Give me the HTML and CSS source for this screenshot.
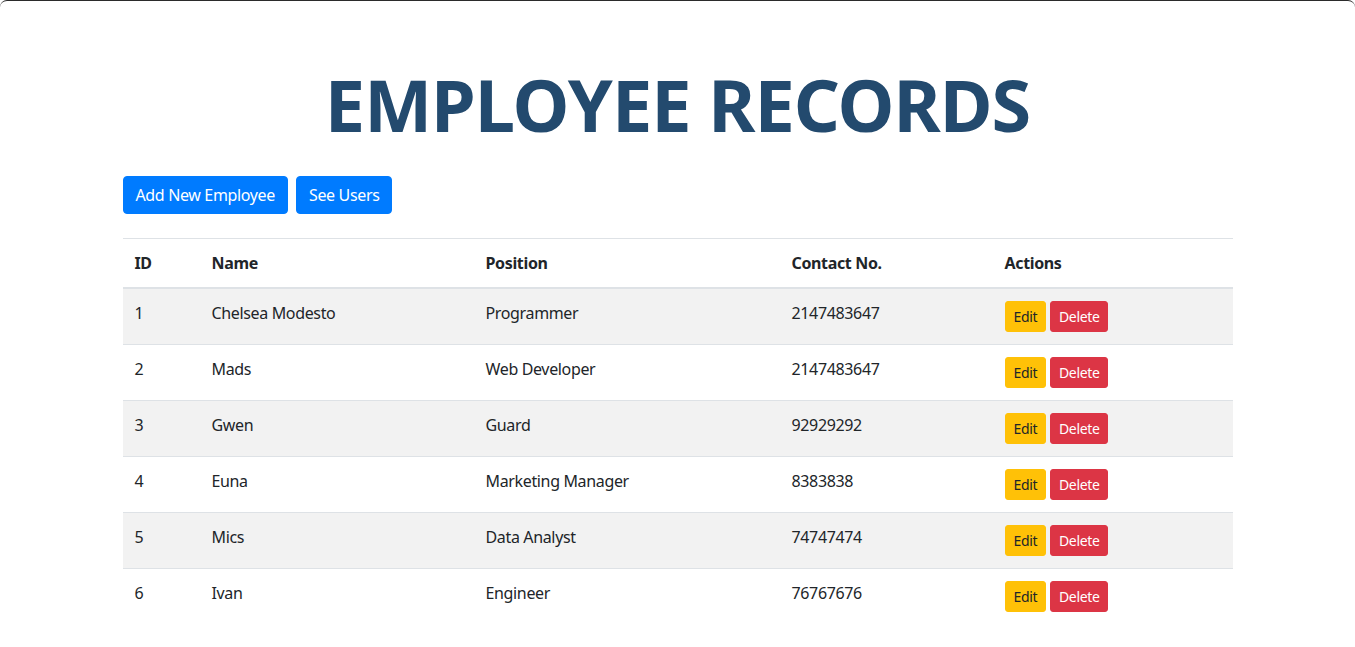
FILE: index.html
```html
<!DOCTYPE html>
<html lang="en">
<head>
<meta charset="utf-8">
<title>Employee Records</title>
<link rel="stylesheet" href="styles.css">
</head>
<body>
<div class="frame">
  <div class="container">
    <h1 class="title">EMPLOYEE RECORDS</h1>
    <div class="toolbar">
      <a class="btn btn-primary" href="#">Add New Employee</a>
      <a class="btn btn-primary" href="#">See Users</a>
    </div>
    <table class="table">
      <colgroup>
        <col class="c-id"><col class="c-name"><col class="c-pos"><col class="c-contact"><col class="c-act">
      </colgroup>
      <thead>
        <tr><th>ID</th><th>Name</th><th>Position</th><th>Contact No.</th><th>Actions</th></tr>
      </thead>
      <tbody>
        <tr><td>1</td><td>Chelsea Modesto</td><td>Programmer</td><td>2147483647</td><td><a class="btn btn-sm btn-warning" href="#">Edit</a> <a class="btn btn-sm btn-danger" href="#">Delete</a></td></tr>
        <tr><td>2</td><td>Mads</td><td>Web Developer</td><td>2147483647</td><td><a class="btn btn-sm btn-warning" href="#">Edit</a> <a class="btn btn-sm btn-danger" href="#">Delete</a></td></tr>
        <tr><td>3</td><td>Gwen</td><td>Guard</td><td>92929292</td><td><a class="btn btn-sm btn-warning" href="#">Edit</a> <a class="btn btn-sm btn-danger" href="#">Delete</a></td></tr>
        <tr><td>4</td><td>Euna</td><td>Marketing Manager</td><td>8383838</td><td><a class="btn btn-sm btn-warning" href="#">Edit</a> <a class="btn btn-sm btn-danger" href="#">Delete</a></td></tr>
        <tr><td>5</td><td>Mics</td><td>Data Analyst</td><td>74747474</td><td><a class="btn btn-sm btn-warning" href="#">Edit</a> <a class="btn btn-sm btn-danger" href="#">Delete</a></td></tr>
        <tr><td>6</td><td>Ivan</td><td>Engineer</td><td>76767676</td><td><a class="btn btn-sm btn-warning" href="#">Edit</a> <a class="btn btn-sm btn-danger" href="#">Delete</a></td></tr>
      </tbody>
    </table>
  </div>
</div>
</body>
</html>
```
FILE: styles.css
```css
html, body {
  margin: 0;
  padding: 0;
  background: #fff;
}
body {
  font-family: "Noto Sans", "Open Sans", Arial, sans-serif;
  font-size: 16px;
  line-height: 1.5;
  color: #212529;
  letter-spacing: -0.35px;
}
.frame {
  min-height: 646px;
  border-top: 1px solid #2b2b2b;
  border-radius: 7px 7px 0 0;
}
.container {
  width: 1110px;
  margin: 0 auto;
  padding: 0 15px;
}
.title {
  margin: 0;
  padding-top: 67px;
  text-align: center;
  font-size: 72px;
  line-height: 1;
  font-weight: 700;
  color: #234a6e;
  letter-spacing: -1px;
}
.toolbar {
  display: flex;
  gap: 8px;
  margin-top: 36px;
  margin-bottom: 24px;
}
.btn {
  display: inline-block;
  text-decoration: none;
  border: 1px solid transparent;
  border-radius: 4px;
  padding: 6px 12px;
  font-size: 16px;
  line-height: 24px;
  color: #fff;
  white-space: nowrap;
}
.btn-primary { background: #007bff; border-color: #007bff; }
.btn-sm {
  padding: 4px 8px;
  font-size: 14px;
  line-height: 21px;
  border-radius: 3px;
}
.btn-warning { background: #ffc107; border-color: #ffc107; color: #212529; }
.btn-danger { background: #dc3545; border-color: #dc3545; color: #fff; }
.table {
  width: 100%;
  border-collapse: collapse;
  table-layout: fixed;
}
.c-id { width: 77px; }
.c-name { width: 274px; }
.c-pos { width: 306px; }
.c-contact { width: 213px; }
.c-act { width: 240px; }
.table th, .table td {
  padding: 12px;
  text-align: left;
  vertical-align: top;
  border-top: 1px solid #dee2e6;
}
.table th {
  font-weight: 700;
  border-bottom: 2px solid #dee2e6;
}
.table tbody tr:nth-child(odd) {
  background: #f2f2f2;
}
```
